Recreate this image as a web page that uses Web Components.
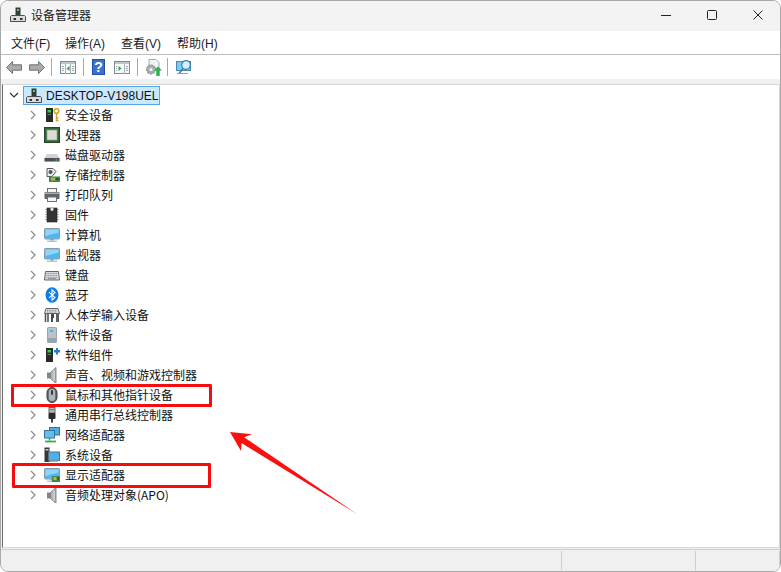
<!DOCTYPE html>
<html lang="zh"><head><meta charset="utf-8"><style>
html,body{margin:0;padding:0;background:#fff}
body{width:781px;height:572px;overflow:hidden;font-family:"Noto Sans CJK SC","Noto Sans",sans-serif}
</style></head><body>
<dm-window></dm-window>
<script>
const S=(w,h,b)=>`<svg xmlns="http://www.w3.org/2000/svg" width="${w}" height="${h}" viewBox="0 0 ${w} ${h}" style="display:block">${b}</svg>`;
const mon=`<rect x=".5" y="1.500" width="15" height="10.500" rx=".8" fill="#62bdf2" stroke="#8a9aa6"/><rect x="1.500" y="2.500" width="13" height="8.500" fill="#4fb6f3"/><path d="M1.500 2.500h13v3L1.500 9z" fill="#8ed6fb"/><rect x="6.500" y="12" width="3" height="1.600" fill="#8e989f"/><rect x="3" y="13.600" width="10" height="1.400" fill="#b7c0c6"/>`;
const spk=`<path d="M3 5.500h3.500v6H3z" fill="#80868a"/><path d="M6.500 5.500l5.500-5v16l-5.500-5z" fill="#aeb4b8" stroke="#6f7579" stroke-width=".8"/><path d="M10 3v11" stroke="#dfe2e4"/>`;
const tower=`<rect x="2" y="1" width="7" height="14" fill="#2a2a2a"/><rect x="3.500" y="3" width="3.500" height="2.500" fill="#35d04b"/><rect x="3.500" y="7" width="3.500" height="1" fill="#777"/>`;
const ICONS={
pc:`<rect x="5.500" y=".5" width="5" height="7.500" fill="#3a3a3a"/><rect x="7" y="2" width="2" height="2" fill="#3ddc55"/><path d="M1.500 8.500h13l1 1v5H.5v-5z" fill="#d9dcde" stroke="#4b4f52"/><rect x="3.500" y="11" width="2.500" height="2" fill="#333"/><rect x="10" y="11" width="2.500" height="2" fill="#333"/>`,
sec:tower+`<circle cx="12.500" cy="4" r="2.300" fill="none" stroke="#d7a12f" stroke-width="1.600"/><path d="M12.500 6.500v8M12.500 11h2M12.500 13.500h2" stroke="#d7a12f" stroke-width="1.400"/>`,
cpu:`<rect x=".5" y=".5" width="15" height="15" fill="#235a28" stroke="#2a4431"/><rect x="1.500" y="1.500" width="13" height="13" fill="#37773c"/><rect x="3" y="3" width="10" height="10" fill="#dcdcd5" stroke="#8e9389" stroke-width=".6"/>`,
disk:`<path d="M3 7h10l2.500 4v3.500H.5V11z" fill="#cfd3d6"/><path d="M.5 11h15v3.500H.5z" fill="#4c5054"/><rect x="11.500" y="12.500" width="2" height="1" fill="#3ddc55"/>`,
stor:`<path d="M3 1.500h6l3 3-4 5H3z" fill="#e9ecee" stroke="#55595d"/><circle cx="6.500" cy="5" r="2" fill="#4f5559"/><rect x="5" y="9.500" width="11" height="5.500" fill="#3d8a49"/><rect x="7" y="10.500" width="4" height="3" fill="#c9a84a"/><rect x="12" y="11" width="3" height="2" fill="#1f5a2b"/>`,
print:`<rect x="3.500" y="1.500" width="9" height="4" fill="#f4f4f4" stroke="#6a6f73"/><rect x=".5" y="5" width="15" height="7" rx="1" fill="#5f6569"/><rect x="1" y="5.500" width="14" height="1.500" fill="#a8adb1"/><rect x="3.500" y="10" width="9" height="4.500" fill="#f6f6f6" stroke="#6a6f73"/>`,
fw:`<rect x="3" y="1" width="10" height="14" fill="#343434" stroke="#222" stroke-width=".6"/><path d="M1.500 2.500H3M1.500 5H3M1.500 7.500H3M1.500 10H3M1.500 12.500H3M13 2.500h1.500M13 5h1.500M13 7.500h1.500M13 10h1.500M13 12.500h1.500" stroke="#777"/><path d="M6.500 1h3v1.500a1.500 1.500 0 0 1-3 0z" fill="#ddd"/>`,
mon:mon,
kbd:`<path d="M1.500 4.500h13l1 8.500H.5z" fill="#d6d9dc" stroke="#63686c"/><path d="M2.500 6.500h11M2.500 8.500h11M2.500 10.300h11" stroke="#8d9397" stroke-dasharray="1 .6"/><rect x="4" y="11.200" width="8" height="1" fill="#7f858a"/>`,
bt:`<ellipse cx="8" cy="8" rx="6.500" ry="7.800" fill="#0a7ce6"/><path d="M5 5.200l6 5.300-3 2.700V2.800l3 2.700-6 5.300" fill="none" stroke="#fff" stroke-width="1.100"/>`,
hid:`<path d="M2 1.500h12l1.500 5H.5z" fill="#dfe2e4" stroke="#5f6468"/><path d="M3 3.300h10M3 5h10" stroke="#7f8589" stroke-dasharray="1 .6"/><path d="M1.500 7v8M4 7v8" stroke="#4a4f53" stroke-width="1.500"/><path d="M7 7h3v4H9v4H7z" fill="#43484c"/><path d="M12 7h3v8h-3z" fill="#5c6165"/>`,
sw:`<rect x="3.500" y=".5" width="9" height="15" rx=".8" fill="#b9c3c9" stroke="#9ba6ac"/><rect x="6" y="3" width="3" height="2" fill="#3fb7e3"/><path d="M3.500 11h9v4.500h-9z" fill="#98a4ab"/>`,
swc:tower+`<path d="M10 3h2V1h2v2h2v2.500h-2v2h-2v-2h-2z" fill="#1f7fd1"/>`,
snd:spk,
mouse:`<rect x="3" y=".5" width="10" height="15" rx="5" fill="#5f6569" stroke="#3a3f43"/><rect x="4.800" y="2" width="6.400" height="12" rx="3" fill="#aeb4b8"/><rect x="7" y="3" width="2" height="5" rx="1" fill="#3a3f43"/>`,
usb:`<rect x="5" y=".5" width="6" height="5.500" fill="#b9bdc0" stroke="#5f6468"/><rect x="6.500" y="2" width="1" height="1.200" fill="#333"/><rect x="8.500" y="2" width="1" height="1.200" fill="#333"/><rect x="4.500" y="6" width="7" height="6" rx="1" fill="#2b2b2b"/><rect x="7" y="12" width="2" height="3.500" fill="#3b3b3b"/>`,
net:`<rect x="5.500" y=".5" width="10" height="7.500" fill="#4aaee9" stroke="#3f6f9a"/><rect x=".5" y="3.500" width="10" height="7.500" fill="#62bff3" stroke="#3f6f9a"/><path d="M5.500 11v2.500" stroke="#35b04a" stroke-width="1.600"/><path d="M1 14.500h11" stroke="#35b04a" stroke-width="1.800"/>`,
sys:`<rect x=".5" y=".5" width="5" height="14.500" fill="#33363a"/><rect x="1.500" y="2" width="3" height="1.500" fill="#c9ced1"/><rect x="4.500" y="5" width="11" height="8.500" fill="#4aafea" stroke="#55707f"/><rect x="6" y="13.500" width="8" height="1.500" fill="#a9b0b4"/>`,
gpu:mon+`<rect x="8" y="9" width="8" height="6" fill="#3d8a49"/><rect x="9.500" y="10" width="3" height="3" fill="#c9a84a"/><rect x="13" y="10.500" width="2" height="2" fill="#1f5a2b"/>`
};
const T={
back:S(16,13,`<path d="M.5 6.500l6-6v3.300h9v5.400h-9v3.300z" fill="#a9acae" stroke="#707375"/>`),
fwd:S(16,13,`<path d="M15.500 6.500l-6-6v3.300h-9v5.400h9v3.300z" fill="#a9acae" stroke="#707375"/>`),
props:S(16,13,`<rect x=".5" y=".5" width="15" height="12" fill="#f6f7f8" stroke="#7f8a92"/><rect x="1" y="1" width="14" height="2" fill="#bcc6cd"/><path d="M5.500 3v10M10.500 3v10" stroke="#a9b2b8"/><path d="M9.500 5v5L6.500 7.500z" fill="#2fa34a"/><path d="M12 5.500h2M12 7.500h2M12 9.500h2M2 5.500h2M2 7.500h2M2 9.500h2" stroke="#a0a9af"/>`),
help:S(13,16,`<rect width="13" height="16" fill="#1f4fae"/><rect x="1" y="1" width="11" height="14" fill="#3d70c8"/><text x="6.500" y="13" font-size="14" font-weight="700" font-family="Liberation Sans" fill="#fff" text-anchor="middle">?</text>`),
view:S(16,13,`<rect x=".5" y=".5" width="15" height="12" fill="#f6f7f8" stroke="#7f8a92"/><rect x="1" y="1" width="14" height="2" fill="#bcc6cd"/><path d="M10.500 3v10" stroke="#a9b2b8"/><path d="M4.500 5v5l3-2.500z" fill="#2fa34a"/><path d="M12 5.500h2M12 7.500h2M12 9.500h2M2 5.500h1M2 7.500h1M2 9.500h1" stroke="#a0a9af"/>`),
upd:S(17,17,`<path d="M4 .5h7l3 3v6H4z" fill="#f2f3f4" stroke="#a5aaae"/><circle cx="6" cy="10.500" r="4.500" fill="#a7adb1" stroke="#7a7f83" stroke-dasharray="2 1"/><circle cx="6" cy="10.500" r="1.600" fill="#f2f3f4"/><path d="M13 7.500l4 4h-2.300V17h-3.400v-5.500H9z" fill="#29b246"/>`),
scan:S(16,14,`<rect x=".5" y="1.500" width="14" height="9" fill="#7ccbf3" stroke="#4a88b0"/><circle cx="10" cy="5" r="4.300" fill="#d8f0fb" stroke="#3d7fa8" stroke-width="1.200"/><path d="M7 8.500l-4 5" stroke="#3d7fa8" stroke-width="1.600"/><path d="M1 13.500h11" stroke="#93a0a8"/>`)
};
function def(name,html){customElements.define(name,class extends HTMLElement{constructor(){super();this.attachShadow({mode:"open"}).innerHTML=html(this)}})}

def("dm-titlebar",()=>`<style>
:host{display:flex;align-items:center;height:30px;box-sizing:border-box;padding-bottom:2px;background:#f3f3f3;flex:none}
.ic{margin-left:9px;width:16px;height:16px;flex:none}
.t{margin-left:5px;font-size:12px;line-height:16px;color:#1a1a1a;flex:1}
.b{width:46px;height:28px;display:flex;align-items:center;justify-content:center;flex:none}
</style><div class="ic">${S(16,16,ICONS.pc)}</div><div class="t">设备管理器</div>
<div class="b">${S(10,10,`<path d="M0 5.500h10" stroke="#222"/>`)}</div>
<div class="b">${S(10,10,`<rect x=".5" y=".5" width="9" height="9" rx="1" fill="none" stroke="#222"/>`)}</div>
<div class="b" style="margin-right:-1px">${S(10,10,`<path d="M.5.500l9 9M9.500.500l-9 9" stroke="#222"/>`)}</div>`);

def("dm-menubar",()=>`<style>
:host{display:flex;height:24px;box-sizing:border-box;background:#fff;align-items:center;padding-left:10px;font-size:12px;color:#1a1a1a;border-bottom:1px solid #bdbdbd;flex:none;font-family:"Liberation Sans","Noto Sans CJK SC",sans-serif}
span{white-space:nowrap}
</style><span style="width:54px">文件(F)</span><span style="width:56px">操作(A)</span><span style="width:56px">查看(V)</span><span>帮助(H)</span>`);

def("dm-toolbar",()=>`<style>
:host{display:flex;height:24px;background:#fff;align-items:center;padding-left:5px;flex:none}
.s{width:1px;height:18px;background:#a8a8a8;flex:none}
div{flex:none}
</style><div>${T.back}</div><div style="margin-left:7px">${T.fwd}</div>
<div class="s" style="margin:0 8px 0 6px"></div><div>${T.props}</div>
<div class="s" style="margin:0 8px 0 7px"></div><div>${T.help}</div>
<div style="margin-left:9px">${T.view}</div>
<div class="s" style="margin:0 7px 0 7px"></div><div>${T.upd}</div>
<div class="s" style="margin:0 8px 0 5px"></div><div>${T.scan}</div>`);

def("dm-row",h=>{const a=h.getAttribute("icon"),r=h.hasAttribute("root");return `<style>
:host{display:flex;align-items:center;height:20px;font-size:12px;color:#111;padding-left:${r?"5px":"24px"}}
.c{width:12px;height:12px;flex:none;margin-right:${r?"3px":"5px"}}
.i{width:16px;height:16px;flex:none}
.l{margin-left:5px;line-height:16px;white-space:nowrap}
.sel{display:flex;align-items:center;gap:4px;background:#cce8ff;border:1px solid #57a8e8;height:19px;margin-top:1px;padding:0 0 0 2px;width:137px;box-sizing:border-box;white-space:nowrap;font-family:"Liberation Sans","Noto Sans CJK SC",sans-serif}
</style><div class="c">${S(12,12,r?`<path d="M2 4l4 4 4-4" fill="none" stroke="#333" stroke-width="1.200"/>`:`<path d="M4 2l4 4-4 4" fill="none" stroke="#8c8c8c" stroke-width="1.200"/>`)}</div>
${r?`<div class="sel"><div class="i">${S(16,16,ICONS[a])}</div><slot></slot></div>`:`<div class="i">${S(16,16,ICONS[a])}</div><div class="l"><slot></slot></div>`}`});

def("dm-tree",()=>`<style>
:host{display:block;flex:1;min-height:0;background:#fff;margin:0 0 0 1px;border-left:1px solid #6f6f6f;border-top:1px solid #d8d8d8;border-right:1px solid #d8d8d8;border-bottom:1px solid #d8d8d8;box-sizing:border-box}
</style><slot></slot>`);

def("dm-status",()=>`<style>
:host{display:grid;grid-template-columns:1fr 134px 84px;height:22px;background:#f0f0f0;border-top:1px solid #cfcfcf;flex:none;box-sizing:border-box;margin-top:1px;padding:1px 0}
div{border-right:1px solid #cfcfcf}
</style><div></div><div></div><div></div>`);

def("dm-annotations",()=>`<style>
:host{position:absolute;inset:-1px;pointer-events:none}
.r{position:absolute;box-sizing:border-box;border:3px solid #f50d0d;border-radius:1px}
svg{position:absolute;left:0;top:0}
</style><div class="r" style="left:11px;top:384px;width:201px;height:23px"></div>
<div class="r" style="left:12px;top:463px;width:199px;height:25px"></div>
<svg width="781" height="572" viewBox="0 0 781 572"><path d="M230 432l22 2.200-8 3L357 514 241.500 443l-.5 8z" fill="#fb0f0f"/></svg>`);

const rows=[["sec","安全设备"],["cpu","处理器"],["disk","磁盘驱动器"],["stor","存储控制器"],["print","打印队列"],["fw","固件"],["mon","计算机"],["mon","监视器"],["kbd","键盘"],["bt","蓝牙"],["hid","人体学输入设备"],["sw","软件设备"],["swc","软件组件"],["snd","声音、视频和游戏控制器"],["mouse","鼠标和其他指针设备"],["usb","通用串行总线控制器"],["net","网络适配器"],["sys","系统设备"],["gpu","显示适配器"],["snd","音频处理对象(APO)"]];
def("dm-window",()=>`<style>
:host{display:flex;flex-direction:column;position:relative;width:781px;height:572px;box-sizing:border-box;border:1px solid #a9a9a9;border-radius:8px;overflow:hidden;background:#f0f0f0}
</style><dm-titlebar></dm-titlebar><dm-menubar></dm-menubar><dm-toolbar></dm-toolbar>
<div style="height:5px;background:#f0f0f0;flex:none"></div>
<dm-tree><dm-row root icon="pc">DESKTOP-V198UEL</dm-row>${rows.map(r=>`<dm-row icon="${r[0]}">${r[1]}</dm-row>`).join("")}</dm-tree>
<dm-status></dm-status><dm-annotations></dm-annotations>`);
</script></body></html>
